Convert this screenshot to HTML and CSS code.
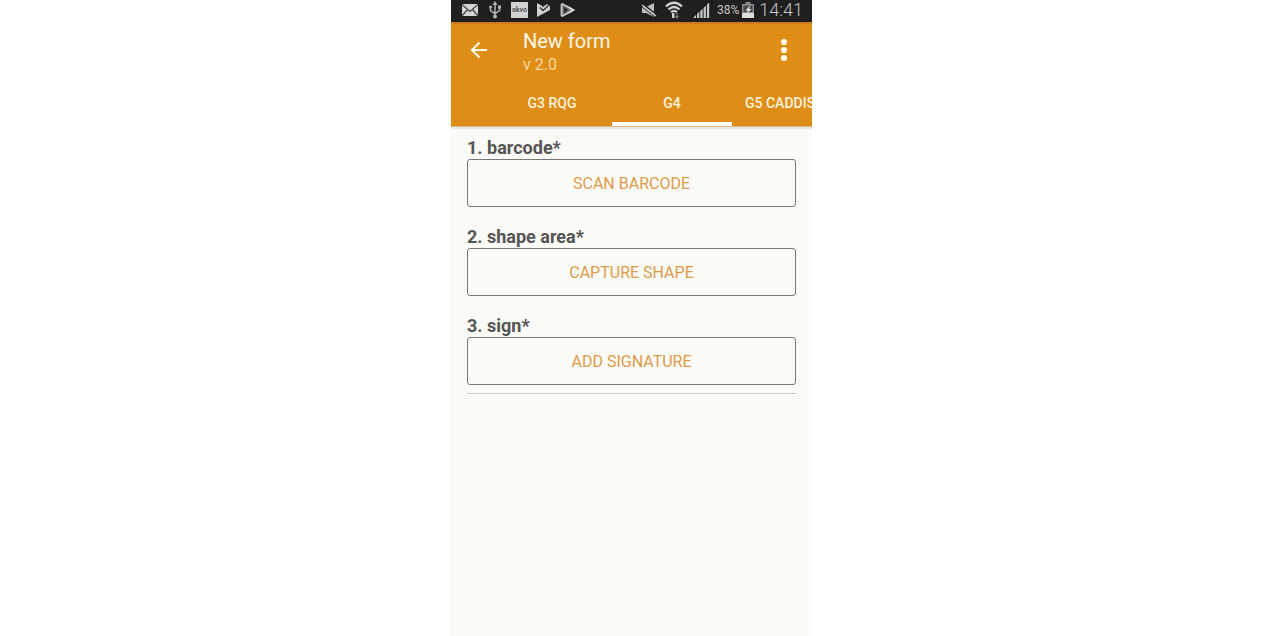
FILE: index.html
```
<!DOCTYPE html>
<html lang="en">
<head>
<meta charset="utf-8">
<meta name="viewport" content="width=device-width, initial-scale=1">
<title>New form</title>
<link rel="stylesheet" href="styles.css">
</head>
<body>
<div class="phone">
  <div class="status">
    <div class="status-left">
      <svg width="18" height="14" viewBox="0 0 18 14"><rect x="1" y="1" width="16" height="12" fill="#d4d4d4"/><path d="M1 1.500L9 8.500L17 1.500M1 13L6.500 6.500M17 13L11.500 6.500" fill="none" stroke="#444" stroke-width="1.200"/></svg>
      <svg width="12" height="18" viewBox="0 0 12 18"><path d="M6 3V15M1.500 6V9.500L6 12.500L10.500 9.500V5.500" fill="none" stroke="#b4b4b4" stroke-width="1.500"/><path d="M6 0L8.500 4H3.500Z" fill="#b4b4b4"/><circle cx="6" cy="15.500" r="2" fill="#b4b4b4"/><circle cx="1.600" cy="6" r="1.500" fill="#b4b4b4"/><path d="M9 4.500h3v3H9z" fill="#b4b4b4"/></svg>
      <span class="app-badge">akvo</span>
      <svg class="check" width="14" height="16" viewBox="0 0 14 16"><path d="M1 1L5.500 3.500L7 5L11 2L14 4.500V8L1 15Z" fill="#d0d0d0"/><path d="M4 5.500L7 8.500L12.500 3.500" fill="none" stroke="#333" stroke-width="1.400"/></svg>
      <svg width="15" height="16" viewBox="0 0 15 16"><path d="M1.500 1.500L13.500 8L1.500 14.500Z" fill="#6c6c6c"/><path d="M1.500 1.500L13.500 8L1.500 14.500M1.500 2V14" fill="none" stroke="#c8c8c8" stroke-width="1.800"/><path d="M4 4.500L8 8L4 11.500Z" fill="#2c2c2c"/><path d="M9 5L12.500 8L9 11" fill="none" stroke="#ddd" stroke-width="1.600"/></svg>
    </div>
    <div class="status-right">
      <svg width="16" height="16" viewBox="0 0 16 16"><path d="M1 5H5L13 1V15L5 11H1Z" fill="#bdbdbd"/><path d="M1 1.500L15 12.500" stroke="#1f1f1f" stroke-width="1.600"/><path d="M1 3L15 14" stroke="#d4d4d4" stroke-width="1.500"/><path d="M1 4.800L14 15" stroke="#1f1f1f" stroke-width="1"/></svg>
      <svg class="wifi" width="18" height="18" viewBox="0 0 18 18"><path d="M1 5.500Q9-2 17 5.500M3.500 8.500Q9 3.500 14.500 8.500M6 11.200Q9 8.700 12 11.200" fill="none" stroke="#d0d0d0" stroke-width="2.200"/><path d="M7 12H9.500V17H7Z" fill="#d0d0d0"/><path d="M12 12V17M10.500 15L12 17L13.500 15" fill="none" stroke="#777" stroke-width="1.200"/></svg>
      <svg class="signal" width="17" height="18" viewBox="0 0 17 18"><path d="M0 17L3 14V17ZM4 13L6.300 10.800V17H4ZM7.300 10L9.600 7.700V17H7.300ZM10.600 7L12.900 4.700V17H10.600ZM13.900 3.500L16.200 1.500V17H13.900Z" fill="#c8c8c8"/></svg>
      <span class="percent">38%</span>
      <svg class="battery" width="12" height="16" viewBox="0 0 12 16"><path d="M3.500 0H8.500V2H12V16H0V2H3.500Z" fill="#8a8a8a"/><path d="M1.500 3.500H10.500V10H1.500Z" fill="#4a4a4a"/><path d="M0 11H12V16H0Z" fill="#dedede"/><path d="M8.500 3L3.500 8.500H6L4.500 12.500L9.500 7H7Z" fill="#e4e4e4"/></svg>
      <time class="clock">14:41</time>
    </div>
  </div>
  <header class="header">
    <div class="toolbar">
      <button class="icon-button" type="button" aria-label="Back"><svg width="18" height="18" viewBox="0 0 18 18"><path d="M17 9H2M9.500 1.500L2 9L9.500 16.500" fill="none" stroke="#fff8e8" stroke-width="2.200"/></svg></button>
      <div class="titles"><h1 class="title">New form</h1><p class="version">v 2.0</p></div>
      <button class="icon-button" type="button" aria-label="More options"><svg width="8" height="24" viewBox="0 0 8 24"><g fill="#fffdf6"><circle cx="4" cy="4" r="3"/><circle cx="4" cy="12" r="3"/><circle cx="4" cy="20" r="3"/></g></svg></button>
    </div>
    <nav class="tabs">
      <button class="tab" type="button">G3 RQG</button>
      <button class="tab tab-active" type="button">G4</button>
      <button class="tab tab-next" type="button">G5 CADDIS</button>
    </nav>
  </header>
  <main class="form">
    <section class="question"><h2 class="label">1. barcode*</h2><button class="action" type="button">SCAN BARCODE</button></section>
    <section class="question"><h2 class="label">2. shape area*</h2><button class="action" type="button">CAPTURE SHAPE</button></section>
    <section class="question"><h2 class="label">3. sign*</h2><button class="action" type="button">ADD SIGNATURE</button></section>
    <hr class="divider">
  </main>
</div>
</body>
</html>
```
FILE: styles.css
```
* { box-sizing: border-box; }
body { margin: 0; padding-right: 2px; background: #fff; font-family: Roboto, "Liberation Sans", sans-serif; }
h1, h2, p { margin: 0; font-weight: 400; }
button { margin: 0; padding: 0; border: 0; background: none; font-family: inherit; }
svg { display: block; flex: none; }

.phone { display: flex; flex-direction: column; width: 100%; max-width: 361px; min-height: 100vh; margin: 0 auto; background: #fafaf6; overflow: hidden; }

.status { display: flex; justify-content: space-between; height: 22px; padding: 0 9px 2px 10px; background: #1f1f1f; color: #c4c4c4; }
.status-left, .status-right { display: flex; align-items: center; }
.status-left { gap: 10px; }
.app-badge { width: 17px; height: 16px; background: #d2d2d2; color: #555; font-size: 7px; font-weight: 700; line-height: 16px; text-align: center; }
.check { margin-left: -2px; }
.wifi { margin-left: 8px; }
.signal { margin-left: 10px; }
.percent { margin-left: 7px; font-size: 12px; }
.battery { margin-left: 3px; }
.clock { margin-left: 5px; font-size: 18px; font-weight: 300; line-height: 20px; }

.header { background: #de8d17; border-top: 2px solid #c97c20; border-bottom: 1px solid #d9b98c; box-shadow: 0 2px 1px #e9e6e8; }
.toolbar { display: flex; align-items: flex-start; height: 56px; padding-top: 2px; }
.icon-button { display: flex; align-items: center; justify-content: center; width: 56px; height: 48px; }
.titles { flex: 1; padding: 2px 0 0 16px; }
.title { color: #fff8ea; font-size: 20px; line-height: 26px; }
.version { color: #f6d6a0; font-size: 16px; line-height: 22px; }
.tabs { display: flex; height: 46px; padding-left: 41px; overflow: hidden; }
.tab { flex: none; width: 120px; padding-top: 4px; border-bottom: 4px solid transparent; color: #fff3dc; font-size: 14px; font-weight: 500; line-height: 38px; white-space: nowrap; }
.tab-active { border-bottom-color: #fff; }
.tab-next { padding-left: 13px; text-align: left; }

.form { flex: 1; padding: 10px 16px; }
.question { margin-bottom: 19px; }
.question:last-of-type { margin-bottom: 8px; }
.label { color: #555; font-size: 18px; font-weight: 700; line-height: 22px; }
.action { display: block; width: 100%; height: 48px; border: 1px solid #77777a; border-radius: 3px; color: #dd9b4b; font-size: 16px; }
.divider { height: 1px; margin: 0; border: 0; background: #ccccc8; }
```
